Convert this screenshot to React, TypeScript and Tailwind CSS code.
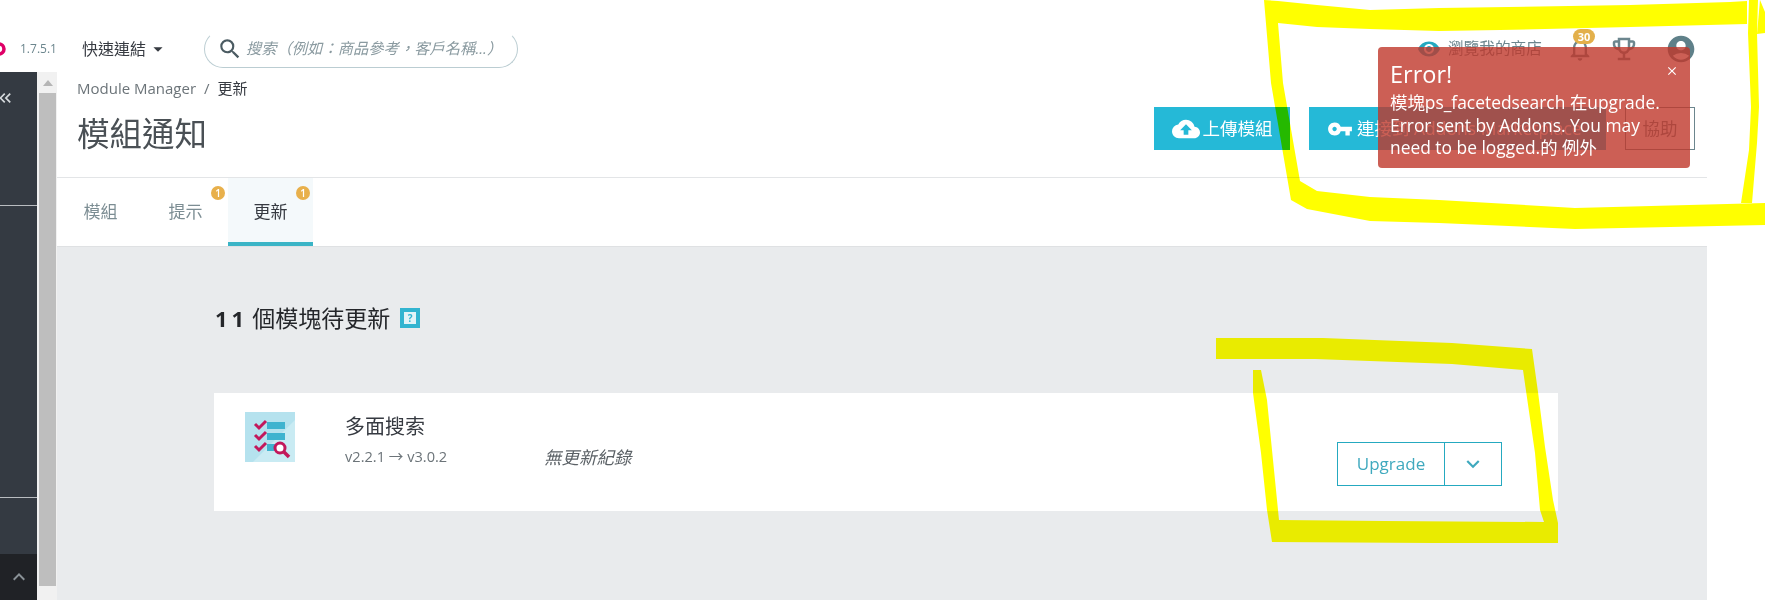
import {
  MdAccountCircle,
  MdArrowDropDown,
  MdClose,
  MdCloudUpload,
  MdKeyboardArrowDown,
  MdKeyboardArrowUp,
  MdKeyboardDoubleArrowLeft,
  MdNotificationsNone,
  MdOutlineEmojiEvents,
  MdSearch,
  MdVisibility,
  MdVpnKey,
} from "react-icons/md";

const fontStack = "font-['Open_Sans','Noto_Sans_CJK_TC',sans-serif]";

function ModuleIcon() {
  return (
    <svg width="50" height="50" viewBox="0 0 50 50" className="shrink-0">
      <rect width="50" height="50" fill="#b5e2ee" />
      <path d="M50 8 L50 50 L8 50 Z" fill="#c9ebf3" />
      <rect x="22" y="10" width="18" height="7" fill="#3fb3cf" />
      <rect x="22" y="21" width="18" height="7" fill="#3fb3cf" />
      <rect x="22" y="32" width="10" height="7" fill="#3fb3cf" />
      <path d="M10 12 L14 16 L21 9 M10 23 L14 27 L21 20 M10 34 L14 38 L21 31" fill="none" stroke="#c2185b" strokeWidth="3" />
      <circle cx="35" cy="36" r="5" fill="#fff" stroke="#c2185b" strokeWidth="3" />
      <path d="M39 40 L44 45" stroke="#c2185b" strokeWidth="3.5" />
    </svg>
  );
}

function TabBadge() {
  return (
    <span className="absolute left-[68px] top-[8px] flex h-[14px] w-[14px] items-center justify-center rounded-full bg-[#e8b04b] text-[10px] font-semibold leading-none text-white">
      1
    </span>
  );
}

// the yellow marker strokes someone drew over the screenshot
function Scribbles() {
  return (
    <svg width="1765" height="600" viewBox="0 0 1765 600" className="pointer-events-none absolute left-0 top-0 mix-blend-multiply">
      <g fill="#ffff00">
        <path d="M1264 0 L1278 1 L1317 5 L1370 10 L1439 8 L1630 5 L1730 2 L1747 1 L1747 24 L1630 27 L1500 30 L1439 31 L1370 29 L1317 27 L1278 23 L1283 83 L1300 181 L1317 191 L1370 197 L1439 200 L1575 208 L1765 203 L1765 225 L1575 229 L1439 223 L1370 221 L1307 209 L1291 200 L1271 83 Z" />
        <path d="M1749 0 L1758 0 L1757 33 L1759 107 L1757 143 L1752 203 L1741 203 L1749 150 L1751 107 L1748 33 Z" />
        <path d="M1760 0 L1765 12 L1765 33 L1757 34 Z" />
        <path d="M1216 338 L1323 338 L1452 343 L1532 349 L1538 392 L1545 447 L1553 500 L1558 523 L1558 543 L1432 543 L1272 542 L1267 510 L1261 453 L1253 393 L1253 370 L1261 370 L1267 400 L1273 460 L1279 520 L1385 521 L1544 522 L1540 510 L1535 453 L1523 370 L1452 364 L1315 359 L1216 359 Z" />
      </g>
    </svg>
  );
}

function Header() {
  return (
    <header className="flex h-[72px] items-center pt-[25px] text-[#363a41]">
      <svg width="14" height="14" viewBox="0 0 14 14" className="-ml-[8px] shrink-0">
        <circle cx="7" cy="7" r="5" fill="none" stroke="#df0067" strokeWidth="3.5" />
      </svg>
      <span className="ml-[14px] text-[12px] text-[#6c868e]">1.7.5.1</span>
      <span className="ml-[25px] flex items-center text-[16px]">
        快速連結
        <MdArrowDropDown className="ml-[1px]" size={22} />
      </span>
      <div className="ml-[35px] flex h-[38px] w-[314px] items-center rounded-full border border-[#bbcdd2] border-t-transparent pl-[12px]">
        <MdSearch className="text-[#4b5b62]" size={26} />
        <span className="ml-[3px] text-[15.3px] italic text-[#8a9aa0]">搜索（例如：商品參考，客戶名稱...）</span>
      </div>
      <div className="ml-auto flex items-center pr-[68px]">
        <MdVisibility className="text-[#25a9c0]" size={24} />
        <span className="ml-[7px] text-[15.7px] text-[#6c868e]">瀏覽我的商店</span>
        <div className="relative ml-[24px]">
          <MdNotificationsNone className="text-[#6c868e]" size={28} />
          <span className="absolute -top-[6px] left-[7px] flex h-[15px] w-[22px] items-center justify-center rounded-full bg-[#e3b04b] text-[11px] font-bold leading-none text-white">
            30
          </span>
        </div>
        <MdOutlineEmojiEvents className="ml-[15px] text-[#6c868e]" size={30} />
        <MdAccountCircle className="ml-[26px] text-[#5f8089]" size={32} />
      </div>
    </header>
  );
}

function Sidebar() {
  return (
    <aside className="flex w-[37px] shrink-0 flex-col overflow-hidden bg-[#343a42] text-[#d5d9dc]">
      <div className="h-[134px] border-b border-[#b9bcc0] pt-[16px]">
        <MdKeyboardDoubleArrowLeft className="-ml-[5px]" size={20} />
      </div>
      <div className="h-[292px] border-b border-[#b9bcc0]" />
      <div className="flex-1" />
      <div className="flex h-[46px] items-center justify-center bg-[#202226] text-[#8a9297]">
        <MdKeyboardArrowUp size={24} />
      </div>
    </aside>
  );
}

function FakeScrollbar() {
  return (
    <div className="flex w-[20px] shrink-0 flex-col bg-[#f1f1f1] pl-[2px]">
      <div className="flex h-[21px] items-center justify-center">
        <svg width="10" height="6" viewBox="0 0 10 6">
          <path d="M5 0 L10 6 L0 6 Z" fill="#b5b5b5" />
        </svg>
      </div>
      <div className="h-[493px] w-[17px] bg-[#bebebe]" />
    </div>
  );
}

function PageHead() {
  return (
    <div className="h-[106px] border-b border-[#e3e5e7] pl-[20px] pr-[12px] pt-[7px]">
      <div className="flex h-[18px] items-center text-[15px] text-[#6c7479]">
        <span>Module Manager</span>
        <span className="mx-[8px]">/</span>
        <span className="text-[#363a41]">更新</span>
      </div>
      <div className="mt-[10px] flex items-start justify-between">
        <h1 className="mt-[7px] text-[32.5px] font-normal leading-[40px] text-[#4a5055]">模組通知</h1>
        <div className="flex items-stretch">
          <button className="flex h-[43px] w-[136px] items-center justify-center bg-[#25b9d7] text-[17.5px] text-white">
            <MdCloudUpload size={28} />
            <span className="ml-[3px]">上傳模組</span>
          </button>
          <button className="ml-[19px] flex h-[43px] w-[297px] items-center bg-[#25b9d7] pl-[18px] text-[17.5px] text-white">
            <MdVpnKey size={26} />
            <span className="ml-[4px] whitespace-nowrap">連接到 Addons Marketplace</span>
          </button>
          <button className="ml-[19px] h-[43px] w-[70px] border border-[#6c868e] text-[17.5px] text-[#6c868e]">協助</button>
        </div>
      </div>
    </div>
  );
}

function Tabs() {
  const tabs = [
    { label: "模組", active: false, badge: false },
    { label: "提示", active: false, badge: true },
    { label: "更新", active: true, badge: true },
  ];
  return (
    <div className="flex h-[69px] border-b border-[#dfe1e3] pl-[1px]">
      {tabs.map((t) => (
        <div
          key={t.label}
          className={`relative flex h-[68px] w-[85px] items-center justify-center border-b-4 pt-[4px] text-[17px] ${
            t.active ? "border-[#3ab4c6] bg-[#f4f9fb] text-[#363a41]" : "border-transparent text-[#7c8d93]"
          }`}
        >
          {t.label}
          {t.badge && <TabBadge />}
        </div>
      ))}
    </div>
  );
}

function ModuleCard() {
  return (
    <div className="-ml-[1px] mt-[60px] flex h-[118px] w-[1344px] bg-white pl-[31px] pr-[56px]">
      <div className="pt-[19px]">
        <ModuleIcon />
      </div>
      <div className="ml-[50px] w-[199px] pt-[20px]">
        <div className="text-[20px] leading-[28px] text-[#363a41]">多面搜索</div>
        <div className="mt-[5px] text-[14.6px] leading-[20px] text-[#6c7479]">v2.2.1 → v3.0.2</div>
      </div>
      <div className="pt-[52px] text-[17.5px] italic leading-[24px] text-[#5b6166]">無更新紀錄</div>
      <div className="ml-auto mt-[49px] flex h-[44px] w-[165px] border border-[#25a9c0] text-[#3fa9be]">
        <div className="flex w-[107px] items-center justify-center border-r border-[#25a9c0] text-[17px] font-medium">Upgrade</div>
        <div className="flex flex-1 items-center justify-center">
          <MdKeyboardArrowDown size={26} />
        </div>
      </div>
    </div>
  );
}

function ErrorToast() {
  return (
    <div className="absolute left-[1378px] top-[47px] h-[121px] w-[312px] rounded-[4px] bg-[#bf372a]/80 pl-[12px] pt-[11px] text-white">
      <MdClose className="absolute right-[11px] top-[17px]" size={14} />
      <div className="text-[23.5px] leading-[32px]">Error!</div>
      <div className="mt-[1px] w-[285px] text-[17.4px] leading-[22.5px]">
        模塊ps_facetedsearch 在upgrade. Error sent by Addons. You may need to be logged.的 例外
      </div>
    </div>
  );
}

export default function App() {
  return (
    <div className={`relative h-[600px] w-[1765px] overflow-hidden bg-white ${fontStack}`}>
      <Header />
      <div className="flex h-[528px]">
        <Sidebar />
        <FakeScrollbar />
        <main className="flex w-[1650px] flex-col">
          <PageHead />
          <Tabs />
          <section className="flex-1 bg-[#e9ebed] pl-[158px] pt-[56px]">
            <div className="flex h-[30px] items-center text-[#24262a]">
              <span className="text-[22px] font-bold tracking-[4px]">11</span>
              <span className="ml-[4px] text-[23px]">個模塊待更新</span>
              <span className="ml-[10px] flex h-[20px] w-[20px] items-center justify-center border-[4px] border-[#32b4d0] bg-[#e2f3f7] text-[10px] font-bold text-[#32b4d0]">
                ?
              </span>
            </div>
            <ModuleCard />
          </section>
        </main>
      </div>
      <ErrorToast />
      <Scribbles />
    </div>
  );
}
